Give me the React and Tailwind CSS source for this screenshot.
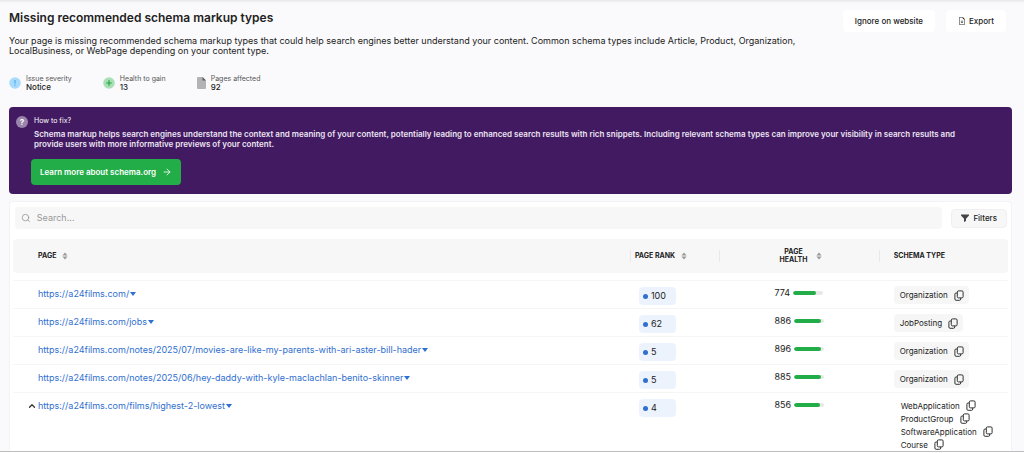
import React from 'react';
import { Search, ArrowRight, ChevronUp } from 'lucide-react';
import { BsFileEarmarkArrowDown } from 'react-icons/bs';

const stats = [
  { label: 'Issue severity', value: 'Notice', icon: 'notice' },
  { label: 'Health to gain', value: '13', icon: 'health' },
  { label: 'Pages affected', value: '92', icon: 'pages' },
];

const pages = [
  { url: 'https://a24films.com/', rank: 100, health: 774, types: ['Organization'] },
  { url: 'https://a24films.com/jobs', rank: 62, health: 886, types: ['JobPosting'] },
  {
    url: 'https://a24films.com/notes/2025/07/movies-are-like-my-parents-with-ari-aster-bill-hader',
    rank: 5,
    health: 896,
    types: ['Organization'],
  },
  {
    url: 'https://a24films.com/notes/2025/06/hey-daddy-with-kyle-maclachlan-benito-skinner',
    rank: 5,
    health: 885,
    types: ['Organization'],
  },
  {
    url: 'https://a24films.com/films/highest-2-lowest',
    rank: 4,
    health: 856,
    types: ['WebApplication', 'ProductGroup', 'SoftwareApplication', 'Course'],
  },
];

const StatIcon = ({ type }) => {
  if (type === 'pages') {
    return (
      <svg viewBox="0 0 9 12" className="h-3 w-[9px] shrink-0" aria-hidden="true">
        <path d="M1 0H5.5L9 3.5V11a1 1 0 0 1-1 1H1a1 1 0 0 1-1-1V1a1 1 0 0 1 1-1z" fill="#b3b3b5" />
        <path d="M5.5 0L9 3.5H5.5z" fill="#5f5f62" />
      </svg>
    );
  }
  if (type === 'health') {
    return (
      <svg viewBox="0 0 12 12" className="h-3 w-3 shrink-0" aria-hidden="true">
        <circle cx="6" cy="6" r="5.8" fill="#a9dfb5" />
        <path d="M6 3.2v5.6M3.2 6h5.6" stroke="#22a845" strokeWidth="1.2" />
      </svg>
    );
  }
  return (
    <svg viewBox="0 0 12 12" className="h-3 w-3 shrink-0" aria-hidden="true">
      <circle cx="6" cy="6" r="5.8" fill="#a8dafb" />
      <path d="M6 3v3.6M6 7.6v1.2" stroke="#3fa9f0" strokeWidth="1.1" />
    </svg>
  );
};

const CopyIcon = () => (
  <svg viewBox="0 0 10 11" className="h-[11px] w-2.5" fill="none" stroke="#333" aria-hidden="true">
    <rect x="3.3" y="0.9" width="5.8" height="7" rx="1.2" />
    <path d="M3.3 3H2.1A1.2 1.2 0 0 0 0.9 4.2v4.9a1.2 1.2 0 0 0 1.2 1.2h3.4a1.2 1.2 0 0 0 1.2-1.2V7.9" />
  </svg>
);

const SortIcon = () => (
  <svg viewBox="0 0 6 8" className="h-2 w-1.5 shrink-0" aria-hidden="true">
    <path d="M3 0.4L5.6 3.4H0.4z" fill="#9a9a9c" />
    <path d="M3 7.6L0.4 4.6h5.2z" fill="#9a9a9c" />
  </svg>
);

const SortButton = ({ children }) => (
  <button className="inline-flex items-center gap-1.5 font-bold uppercase">
    {children}
    <SortIcon />
  </button>
);

const SchemaType = ({ name, plain }) => (
  <div
    className={
      plain
        ? 'flex h-[13px] items-center gap-1.5 pl-[7px] text-[8px]'
        : 'flex h-[18px] w-fit items-center gap-1.5 rounded-sm bg-[#f6f6f6] pr-[5px] pl-1.5 text-[8px]'
    }
  >
    {name}
    <button aria-label={`Copy ${name}`}>
      <CopyIcon />
    </button>
  </div>
);

const PageRow = ({ page }) => {
  const expanded = page.types.length > 1;

  return (
    <tr className="h-7 align-top [&>td]:border-t [&>td]:border-[#f5f5f6]">
      <td className="pt-[7px]">
        <div className="flex h-3 items-center">
          <div className="flex w-[25px] shrink-0 justify-end pr-px">
            {expanded && (
              <button aria-label="Collapse row">
                <ChevronUp className="h-2.5 w-2.5 text-[#333]" strokeWidth={3} />
              </button>
            )}
          </div>
          <a href={page.url} className="flex items-center gap-px text-[9px] text-[#2f6fd0]">
            {page.url}
            <svg viewBox="0 0 6 4" className="h-1 w-1.5" aria-hidden="true">
              <path d="M0 0h6L3 4z" fill="currentColor" />
            </svg>
          </a>
        </div>
      </td>
      <td className="pt-1.5 pl-[9px]">
        <div className="flex h-[18px] w-[37px] items-center gap-[3px] rounded-sm bg-[#edf3fc] pl-1">
          <span className="h-[5px] w-[5px] rounded-full bg-[#2f6fd0]" />
          {page.rank}
        </div>
      </td>
      <td className="pt-1.5 pl-[55px]">
        <div className="flex h-3 items-center gap-[3px]">
          {page.health}
          <div className="h-1 w-[30px] overflow-hidden rounded-full bg-[#e8e8e8]">
            <div className="h-full rounded-full bg-[#22ad48]" style={{ width: `${page.health / 10}%` }} />
          </div>
        </div>
      </td>
      <td className={expanded ? 'pt-1.5 pl-[15px]' : 'pt-[5px] pl-[15px]'}>
        {page.types.map((type) => (
          <SchemaType key={type} name={type} plain={expanded} />
        ))}
      </td>
    </tr>
  );
};

const PagesTable = () => (
  <table className="w-full table-fixed border-separate border-spacing-0 text-left text-[9px] text-[#222]">
    <colgroup>
      <col className="w-[62%]" />
      <col className="w-[9%]" />
      <col className="w-[16%]" />
      <col className="w-[13%]" />
    </colgroup>
    <thead className="text-[7px] leading-2">
      <tr className="[&>th]:h-[34px] [&>th]:bg-[#f7f7f7] [&>th]:p-0">
        <th className="rounded-l">
          <div className="pl-[25px]">
            <SortButton>Page</SortButton>
          </div>
        </th>
        <th>
          <div className="flex h-3 items-center border-l border-[#e9e9e9] pl-1">
            <SortButton>Page rank</SortButton>
          </div>
        </th>
        <th>
          <div className="flex h-3 items-center justify-center border-l border-[#e9e9e9] text-center">
            <SortButton>
              <span className="w-8">Page health</span>
            </SortButton>
          </div>
        </th>
        <th className="rounded-r">
          <div className="flex h-3 items-center border-l border-[#e9e9e9] pl-3.5 uppercase">Schema type</div>
        </th>
      </tr>
    </thead>
    <tbody className="before:block before:h-[7px] before:content-['']">
      {pages.map((page) => (
        <PageRow key={page.url} page={page} />
      ))}
    </tbody>
  </table>
);

const HowToFix = () => (
  <section className="flex items-start gap-1.5 rounded bg-[#421a61] px-[7px] py-[9px] text-white">
    <span className="flex h-3 w-3 shrink-0 items-center justify-center rounded-full bg-[#9a84ab] text-[8px] font-bold">
      ?
    </span>
    <div>
      <h2 className="text-[7px] leading-[9px]">How to fix?</h2>
      <p className="mt-1 max-w-[940px] text-[8px] leading-[10px] font-semibold text-[#ebe4f1]">
        Schema markup helps search engines understand the context and meaning of your content, potentially leading to
        enhanced search results with rich snippets. Including relevant schema types can improve your visibility in
        search results and provide users with more informative previews of your content.
      </p>
      <a
        href="https://schema.org"
        className="mt-2.5 -ml-[3px] flex h-[26px] w-fit items-center gap-1.5 rounded-sm bg-[#22ad48] px-[9px] text-[8px] font-semibold"
      >
        Learn more about schema.org
        <ArrowRight className="h-2.5 w-2.5" strokeWidth={2} />
      </a>
    </div>
  </section>
);

const App = () => (
  <div className="flex h-screen flex-col bg-white pb-px font-['Inter',sans-serif] text-[#222]">
    <main className="flex min-h-0 flex-1 flex-col overflow-hidden border-b border-[#bdbdbd] bg-[#fafafc] pr-3 pl-[9px] shadow-[inset_0_5px_3px_-4px_#e0e0e3]">
      <header className="flex items-start justify-between pt-2.5">
        <div>
          <h1 className="text-[12px] leading-4 font-semibold">Missing recommended schema markup types</h1>
          <p className="mt-[10px] max-w-[825px] text-[9px] leading-[10px]">
            Your page is missing recommended schema markup types that could help search engines better understand your
            content. Common schema types include Article, Product, Organization, LocalBusiness, or WebPage depending on
            your content type.
          </p>
        </div>
        <div className="flex shrink-0 gap-[11px] pr-1.5 text-[8px] font-medium">
          <button className="h-[22px] rounded-sm bg-white px-3">Ignore on website</button>
          <button className="flex h-[22px] items-center gap-[3px] rounded-sm bg-white px-3">
            <BsFileEarmarkArrowDown className="h-2 w-2" />
            Export
          </button>
        </div>
      </header>

      <dl className="mt-[18px] flex gap-[31px]">
        {stats.map((stat) => (
          <div key={stat.label} className="flex items-center gap-[5px]">
            <StatIcon type={stat.icon} />
            <div>
              <dt className="text-[7px] leading-[9px] text-[#555]">{stat.label}</dt>
              <dd className="text-[8px] leading-[9px] font-medium">{stat.value}</dd>
            </div>
          </div>
        ))}
      </dl>

      <div className="mt-[15px]">
        <HowToFix />
      </div>

      <section className="mt-[7px] flex-1 rounded-t border border-b-0 border-[#f3f3f5] bg-white px-[3px] pt-[5px]">
        <div className="mb-[10px] flex items-center gap-[9px] pr-px pl-0.5">
          <label className="flex h-[22px] flex-1 items-center gap-1.5 rounded-sm bg-[#f7f7f7] px-1.5">
            <Search className="h-2.5 w-2.5 text-[#999]" strokeWidth={2} />
            <input
              type="text"
              aria-label="Search"
              placeholder="Search..."
              className="w-full bg-transparent text-[9px] outline-none placeholder:text-[#999]"
            />
          </label>
          <button className="flex h-[19px] items-center gap-1 rounded-sm border border-[#f0f0f0] bg-[#f7f7f7] px-[9px] text-[8px] font-medium">
            <svg viewBox="0 0 8 8" className="h-2 w-2" aria-hidden="true">
              <path d="M0 0.5h8v1L5 4.8V7L3 8V4.8L0 1.5z" fill="#444" />
            </svg>
            Filters
          </button>
        </div>
        <PagesTable />
      </section>
    </main>
  </div>
);

export default App;
